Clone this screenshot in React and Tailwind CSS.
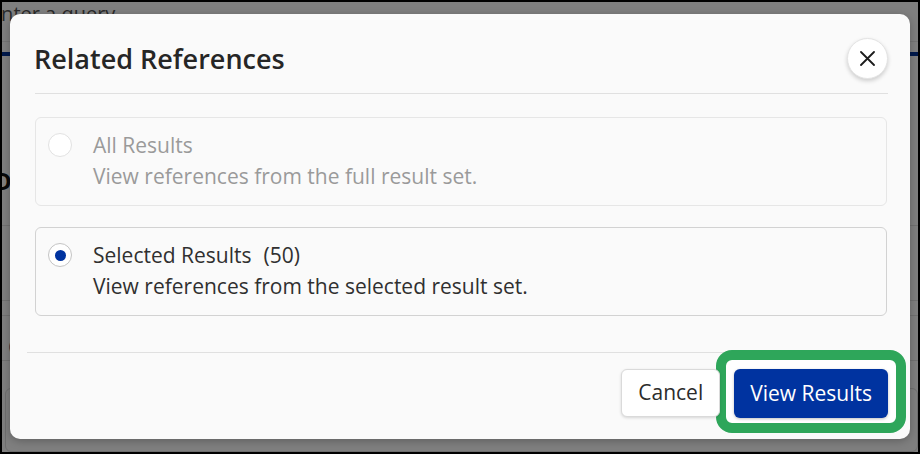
import React from "react";

function Radio({ checked, disabled }) {
  return (
    <div
      className={
        "mt-[3px] flex h-[24px] w-[24px] shrink-0 items-center justify-center rounded-full border bg-white " +
        (disabled ? "border-[#e2e2e2] bg-[#fafafa]" : "border-[#c4c4c4]")
      }
    >
      {checked && <div className="h-[11px] w-[11px] rounded-full bg-[#0033a0]" />}
    </div>
  );
}

function Option({ title, count, desc, checked, disabled }) {
  return (
    <div
      className={
        "flex items-start gap-[21px] rounded-[6px] border px-[12px] pt-[12px] pb-[13px] " +
        (disabled ? "border-[#e6e6e6]" : "border-[#d2d2d2]")
      }
    >
      <Radio checked={checked} disabled={disabled} />
      <div
        className={
          "text-[21px] leading-[31px] " + (disabled ? "text-[#9a9a9a]" : "text-[#303030]")
        }
      >
        <div>
          {title}
          {count && <span className="ml-[12px]">{count}</span>}
        </div>
        <div>{desc}</div>
      </div>
    </div>
  );
}

export default function App() {
  return (
    <div className="relative box-border h-[454px] w-[920px] overflow-hidden border-2 border-black bg-white font-['Open_Sans',sans-serif]">
      {/* background page */}
      <div className="flex h-full flex-col">
        <div className="h-[50px] border-b border-[#e8e8e8] pl-0 pt-[0px]">
          <div className="ml-[-12px] text-[20px] leading-[24px] text-[#555]">Enter a query</div>
        </div>
        <div className="mt-[10px] h-[6px] bg-[#003399]" />
        <div className="pt-[113px] text-[24px] font-bold leading-[24px] text-[#111] ml-[-8px]">Do</div>
        <div className="mt-[32px] border-b border-[#e0e0e0]" />
        <div className="mt-[74px] border-b border-[#e0e0e0]" />
        <div className="mt-[14px] border-b border-[#e0e0e0]" />
        <div className="ml-[6px] mt-[18px] text-[22px] leading-[24px] text-[#2a4a7a]">C</div>
        <div className="mt-[2px] border-b border-[#e0e0e0]" />
        <div className="ml-[3px] mt-[27px] h-[80px] rounded-[6px] border border-[#dcdcdc]" />
      </div>

      {/* backdrop */}
      <div className="absolute inset-0 bg-black/50" />

      {/* modal */}
      <div className="absolute left-[8px] top-[12px] flex h-[425px] w-[900px] flex-col rounded-[10px] bg-[#fafafa] shadow-[0_2px_8px_rgba(0,0,0,0.25)]">
        <div className="ml-[25px] mr-[22px] flex items-center justify-between border-b border-[#e0e0e0] pt-[24px] pb-[14px]">
          <h2 className="ml-[-1px] text-[27px] font-semibold leading-[32px] text-[#262626]">Related References</h2>
          <button className="flex h-[41px] w-[41px] items-center justify-center rounded-full border border-[#e4e4e4] bg-white shadow-[0_2px_4px_rgba(0,0,0,0.18)]">
            <svg width="15" height="15" viewBox="0 0 15 15" fill="none" stroke="#1c1c1c" strokeWidth="1.8" strokeLinecap="round">
              <path d="M1 1 L14 14 M14 1 L1 14" />
            </svg>
          </button>
        </div>

        <div className="ml-[25px] mr-[23px] flex flex-col gap-[21px] pt-[23px]">
          <Option
            title="All Results"
            desc="View references from the full result set."
            disabled
          />
          <Option
            title="Selected Results"
            count="(50)"
            desc="View references from the selected result set."
            checked
          />
        </div>

        <div className="relative mx-[17px] mt-[36px] flex justify-end gap-[14px] border-t border-[#e0e0e0] pt-[16px] pr-[5px]">
          <div className="absolute left-[689px] top-[-3px] h-[83px] w-[190px] rounded-[16px] border-[10px] border-[#2ea65a] bg-white" />
          <button className="relative h-[48px] rounded-[6px] border border-[#dadada] bg-white px-[16px] text-[21px] text-[#2b2b2b] shadow-[0_1px_3px_rgba(0,0,0,0.15)]">
            Cancel
          </button>
          <button className="relative h-[49px] rounded-[6px] bg-[#0033a0] px-[16px] text-[21px] text-white shadow-[0_1px_3px_rgba(0,0,0,0.25)]">
            View Results
          </button>
        </div>
      </div>
    </div>
  );
}
